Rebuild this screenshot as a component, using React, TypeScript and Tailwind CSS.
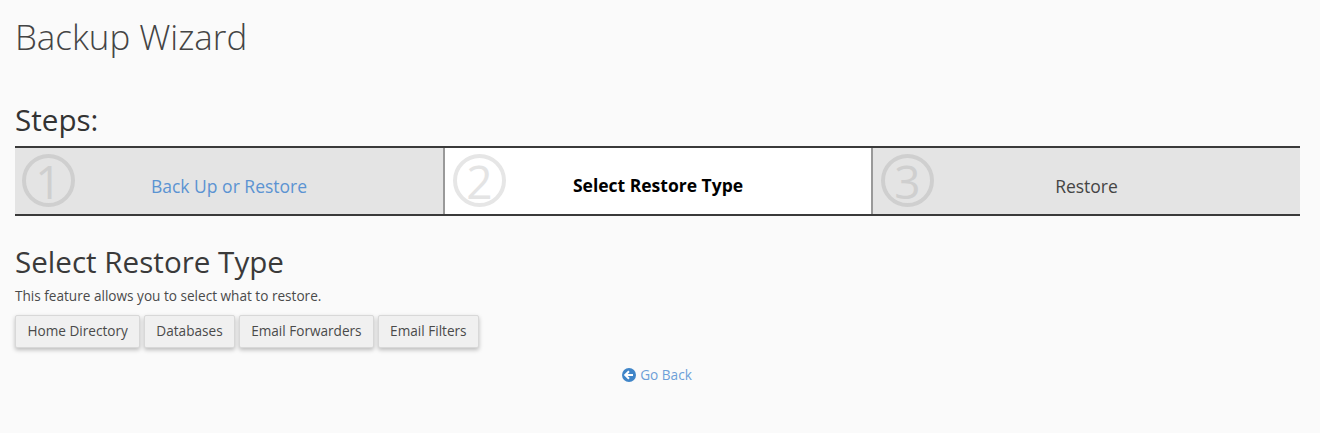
const STEPS = [
  { n: "1", label: "Back Up or Restore", kind: "link", pos: "left-[7px]" },
  { n: "2", label: "Select Restore Type", kind: "current", pos: "left-[8px]" },
  { n: "3", label: "Restore", kind: "todo", pos: "left-[8px]" },
];

const TYPES = ["Home Directory", "Databases", "Email Forwarders", "Email Filters"];

export default function App() {
  return (
    <div className="h-[433px] overflow-hidden bg-[#fafafa] pl-[15px] pr-[20px] font-['Open_Sans',sans-serif] text-[#333]">
      <h1 className="pt-[13px] text-[34.9px] font-light leading-[48px] text-[#444]">Backup Wizard</h1>
      <h2 className="mt-[40px] text-[29.6px] font-normal leading-[38px] text-[#333]">Steps:</h2>

      {/* Wizard bar */}
      <div className="mt-[7px] grid h-[70px] grid-cols-[430px_428px_1fr] border-y-2 border-[#3a3a3a]">
        {STEPS.map((s) => (
          <div
            key={s.n}
            className={`relative flex items-center justify-center border-r-2 border-[#999] last:border-r-0 ${
              s.kind === "current" ? "bg-white pt-[8px]" : "bg-[#e4e4e4] pt-[10px]"
            }`}
          >
            <span
              className={`absolute top-[6px] flex h-[53px] w-[53px] items-center justify-center rounded-full border-[4px] text-[46px] font-normal leading-none ${s.pos} ${
                s.kind === "current" ? "border-[#e6e6e6] text-[#e4e4e4]" : "border-[#cfcfcf] text-[#cfcfcf]"
              }`}
            >
              {s.n}
            </span>
            <span
              className={
                s.kind === "link"
                  ? "text-[17.5px] text-[#5b93d2]"
                  : s.kind === "current"
                    ? "text-[17.5px] font-bold text-black"
                    : "text-[17.5px] text-[#444]"
              }
            >
              {s.label}
            </span>
          </div>
        ))}
      </div>

      <h2 className="mt-[25px] text-[29.6px] font-normal leading-[42px] text-[#3a3a3a]">Select Restore Type</h2>
      <p className="mt-[4px] text-[13.6px] leading-[18px] text-[#4a4a4a]">This feature allows you to select what to restore.</p>

      <div className="mt-[10px] flex gap-[3.5px]">
        {TYPES.map((t) => (
          <button
            key={t}
            className="h-[33px] rounded-[2px] border border-[#d8d8d8] bg-[#f0f0f0] px-[11.5px] text-[13.6px] text-[#4a4a4a] shadow-[0_2px_4px_rgba(0,0,0,0.25)]"
          >
            {t}
          </button>
        ))}
      </div>

      <div className="mt-[17px] flex items-center justify-center gap-[4px] pr-[1px] text-[13.6px] text-[#6d9fd8]">
        <svg width="14" height="14" viewBox="0 0 14 14" aria-hidden>
          <circle cx="7" cy="7" r="7" fill="#3f85c8" />
          <path d="M7 3.2 3.2 7 7 10.8M3.6 7H11" fill="none" stroke="#fff" strokeWidth="2" />
        </svg>
        <a>Go Back</a>
      </div>
    </div>
  );
}
